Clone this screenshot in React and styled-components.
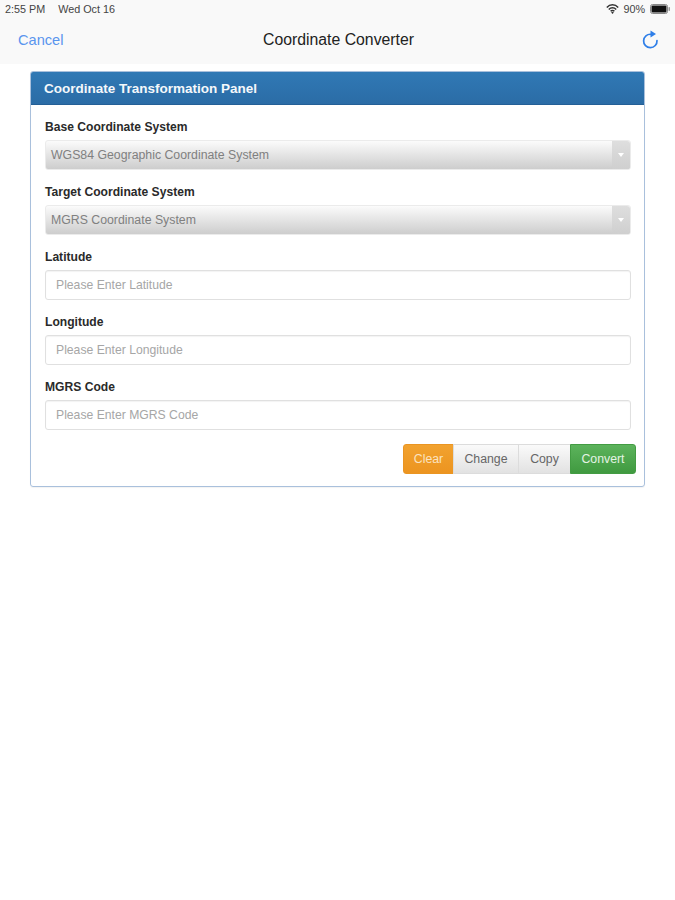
import React from "react";
import styled, { createGlobalStyle } from "styled-components";

const Global = createGlobalStyle`
  html, body { margin: 0; padding: 0; background: #fff; }
  body { font-family: "Liberation Sans", Arial, sans-serif; }
`;

const Page = styled.div`
  width: 675px;
  height: 900px;
  background: #fff;
  overflow: hidden;
`;

const Top = styled.header`
  height: 64px;
  background: #f9f9f9;
`;

const StatusBar = styled.div`
  height: 18px;
  padding: 0 5px;
  display: flex;
  align-items: center;
  justify-content: space-between;
  font-size: 10.8px;
  color: #444;
`;

const StatusLeft = styled.div`
  display: flex;
  gap: 13px;
`;

const StatusRight = styled.div`
  display: flex;
  align-items: center;
  gap: 4px;
  & > svg:last-child { margin-left: 1px; }
`;

const NavBar = styled.div`
  height: 44px;
  padding: 0 15px 0 18px;
  display: flex;
  align-items: center;
  justify-content: space-between;
`;

const NavLink = styled.span`
  width: 59px;
  font-size: 14.6px;
  color: #5a95ee;
`;

const NavTitle = styled.span`
  font-size: 15.8px;
  color: #222;
`;

const NavAction = styled.span`
  width: 60px;
  display: flex;
  justify-content: flex-end;
`;

const Panel = styled.section`
  margin: 7px 30px 0;
  height: 416px;
  box-sizing: border-box;
  border: 1px solid #a9c0dc;
  border-radius: 3px;
  overflow: hidden;
  box-shadow: 0 1px 1px rgba(0, 0, 0, 0.05);
`;

const PanelHeading = styled.h2`
  margin: 0;
  height: 33px;
  padding: 0 13px;
  display: flex;
  align-items: center;
  box-sizing: border-box;
  background: linear-gradient(#3079b5, #2b6ca6);
  border-bottom: 1px solid #245f96;
  color: #f4f8fb;
  font-size: 13.5px;
  font-weight: 700;
`;

const PanelBody = styled.div`
  padding: 13px 13px 0 14px;
`;

const Field = styled.div`
  height: 65px;
`;

const Label = styled.label`
  display: block;
  height: 22px;
  padding-top: 2px;
  box-sizing: border-box;
  font-size: 12.1px;
  font-weight: 700;
  color: #2a2a2a;
  line-height: 14px;
`;

const SelectBox = styled.div`
  height: 30px;
  box-sizing: border-box;
  display: flex;
  align-items: center;
  justify-content: space-between;
  border-radius: 3px;
  border: 1px solid #ebebeb;
  background: linear-gradient(#fbfbfb, #cdcdcd);
  font-size: 12.3px;
  color: #808080;
  padding-left: 5px;
`;

const Arrow = styled.span`
  width: 18px;
  height: 28px;
  display: flex;
  align-items: center;
  justify-content: center;
  background: linear-gradient(#dedede, #cfcfcf);
  border-radius: 0 3px 3px 0;
  &::after {
    content: "";
    border-left: 3px solid transparent;
    border-right: 3px solid transparent;
    border-top: 4px solid #fff;
  }
`;

const Input = styled.input`
  display: block;
  width: 100%;
  height: 30px;
  box-sizing: border-box;
  padding: 0 10px;
  border: 1px solid #e0e0e0;
  border-radius: 3px;
  background: #fff;
  font: 12.2px "Liberation Sans", Arial, sans-serif;
  box-shadow: inset 0 1px 1px rgba(0, 0, 0, 0.05);
  &::placeholder { color: #a6a6a6; opacity: 1; }
`;

const Actions = styled.div`
  display: flex;
  justify-content: flex-end;
  margin: 1px -5px 0 0;
`;

const tones = {
  orange: "background: linear-gradient(#f2a22f, #ec9420); color: #fbe3c0; border-color: #ea9522;",
  plain: "background: linear-gradient(#fafafa, #e2e2e2); color: #666; border-color: #dcdcdc;",
  green: "background: linear-gradient(#5cb35c, #409a40); color: #e4f3e4; border-color: #439c43;",
};

const Button = styled.button`
  height: 30px;
  padding: 0;
  width: ${p => p.$w}px;
  border: 1px solid;
  margin-left: -1px;
  font: 12.3px "Liberation Sans", Arial, sans-serif;
  ${p => tones[p.$tone]}
  &:first-child { border-radius: 3px 0 0 3px; }
  &:last-child { border-radius: 0 3px 3px 0; }
`;

const Wifi = () => (
  <svg width="13" height="10" viewBox="0 0 13 10" fill="none" stroke="#333" strokeWidth="1.5">
    <path d="M0.8 3.4C4-.1 9-.1 12.2 3.4" />
    <path d="M2.8 5.4C4.9 3.2 8.1 3.2 10.2 5.4" />
    <path d="M4.6 7.2C5.7 6.1 7.3 6.1 8.4 7.2" />
    <path d="M6.5 10 5.2 8.4C5.9 7.8 7.1 7.8 7.8 8.4Z" fill="#333" stroke="none" />
  </svg>
);

const Battery = () => (
  <svg width="20" height="10" viewBox="0 0 20 10">
    <rect x="0.5" y="0.5" width="17" height="9" rx="2" fill="none" stroke="#888" />
    <rect x="1.5" y="1.5" width="15" height="7" rx="1" fill="#111" />
    <rect x="18.5" y="3" width="1.5" height="4" rx="0.7" fill="#999" />
  </svg>
);

const Refresh = () => (
  <svg width="20" height="20" viewBox="0 0 20 20" fill="none">
    <path d="M11 4.3A6.7 6.7 0 1 0 17 10.5" stroke="#2f7fe8" strokeWidth="1.7" strokeLinecap="round" />
    <path d="M10.5 0.6 16 4 10.5 7.6Z" fill="#2f7fe8" />
  </svg>
);

const fields = [
  { label: "Base Coordinate System", value: "WGS84 Geographic Coordinate System" },
  { label: "Target Coordinate System", value: "MGRS Coordinate System" },
  { label: "Latitude", placeholder: "Please Enter Latitude" },
  { label: "Longitude", placeholder: "Please Enter Longitude" },
  { label: "MGRS Code", placeholder: "Please Enter MGRS Code" },
];

const buttons = [
  { text: "Clear", tone: "orange", w: 51 },
  { text: "Change", tone: "plain", w: 66 },
  { text: "Copy", tone: "plain", w: 53 },
  { text: "Convert", tone: "green", w: 66 },
];

export default function App() {
  return (
    <Page>
      <Global />
      <Top>
        <StatusBar>
          <StatusLeft>
            <span>2:55 PM</span>
            <span>Wed Oct 16</span>
          </StatusLeft>
          <StatusRight>
            <Wifi />
            <span>90%</span>
            <Battery />
          </StatusRight>
        </StatusBar>
        <NavBar>
          <NavLink>Cancel</NavLink>
          <NavTitle>Coordinate Converter</NavTitle>
          <NavAction><Refresh /></NavAction>
        </NavBar>
      </Top>
      <Panel>
        <PanelHeading>Coordinate Transformation Panel</PanelHeading>
        <PanelBody>
          {fields.map(f => (
            <Field key={f.label}>
              <Label>{f.label}</Label>
              {f.value ? (
                <SelectBox>
                  <span>{f.value}</span>
                  <Arrow />
                </SelectBox>
              ) : (
                <Input placeholder={f.placeholder} />
              )}
            </Field>
          ))}
          <Actions>
            {buttons.map(b => (
              <Button key={b.text} $tone={b.tone} $w={b.w}>{b.text}</Button>
            ))}
          </Actions>
        </PanelBody>
      </Panel>
    </Page>
  );
}
